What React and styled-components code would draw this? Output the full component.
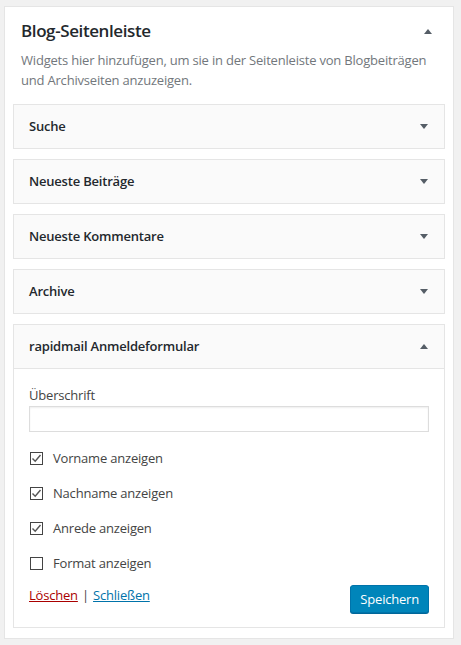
import styled, { createGlobalStyle } from 'styled-components';

const GlobalStyle = createGlobalStyle`
	body {
		margin: 0;
		background: #f1f1f1;
		font-family: 'Open Sans', 'Noto Sans', sans-serif;
		font-size: 13px;
		color: #444;
	}
`;

const Arrow = ({ up }) => (
	<svg width="8" height="5" viewBox="0 0 8 5" style={{ flexShrink: 0 }}>
		<path d={up ? 'M0 5 L4 0 L8 5 Z' : 'M0 0 L8 0 L4 5 Z'} fill="#555d66" />
	</svg>
);

const widgets = ['Suche', 'Neueste Beiträge', 'Neueste Kommentare', 'Archive'];

const options = [
	{ label: 'Vorname anzeigen', checked: true },
	{ label: 'Nachname anzeigen', checked: true },
	{ label: 'Anrede anzeigen', checked: true },
	{ label: 'Format anzeigen', checked: false },
];

const Checkbox = ({ checked }) => (
	<Box>
		{checked && (
			<svg width="11" height="11" viewBox="0 0 11 11">
				<path d="M1.5 5.5 L4.2 8.3 L9.5 2" fill="none" stroke="#555" strokeWidth="1.4" />
			</svg>
		)}
	</Box>
);

const App = () => {
	return (
		<>
			<GlobalStyle />
			<Page>
				<Sidebar>
					<SidebarHead>
						<TitleRow>
							<h2>Blog-Seitenleiste</h2>
							<Arrow up />
						</TitleRow>
						<p>
							Widgets hier hinzufügen, um sie in der Seitenleiste von Blogbeiträgen
							und Archivseiten anzuzeigen.
						</p>
					</SidebarHead>
					<WidgetList>
						{widgets.map((w) => (
							<Widget key={w}>
								<WidgetTop>
									<h3>{w}</h3>
									<Arrow />
								</WidgetTop>
							</Widget>
						))}
						<Widget>
							<WidgetTop open>
								<h3>rapidmail Anmeldeformular</h3>
								<Arrow up />
							</WidgetTop>
							<WidgetInside>
								<Field>
									<label>Überschrift</label>
									<input type="text" />
								</Field>
								<Options>
									{options.map((o) => (
										<Option key={o.label}>
											<Checkbox checked={o.checked} />
											<span>{o.label}</span>
										</Option>
									))}
								</Options>
								<Actions>
									<Links>
										<a className="delete" href="#">Löschen</a>
										<span>|</span>
										<a className="close" href="#">Schließen</a>
									</Links>
									<SaveButton>Speichern</SaveButton>
								</Actions>
							</WidgetInside>
						</Widget>
					</WidgetList>
				</Sidebar>
			</Page>
		</>
	);
};

const Page = styled.div`
	padding: 6px 8px 6px 4px;
`;

const Sidebar = styled.div`
	box-sizing: border-box;
	width: 450px;
	background: #fff;
	border: 1px solid #e5e5e5;
	padding: 0 8px 10px;
`;

const SidebarHead = styled.div`
	padding: 11px 8px 0;

	p {
		margin: 6px 0 0;
		color: #72777c;
		line-height: 20px;
		letter-spacing: -0.2px;
	}
`;

const TitleRow = styled.div`
	display: flex;
	align-items: center;
	justify-content: space-between;
	padding-right: 5px;

	h2 {
		margin: 0;
		font-size: 17px;
		font-weight: 600;
		line-height: 26px;
		color: #23282d;
		letter-spacing: -0.4px;
	}
`;

const WidgetList = styled.div`
	display: flex;
	flex-direction: column;
	gap: 10px;
	margin-top: 14px;
`;

const Widget = styled.div`
	border: 1px solid #e5e5e5;
	background: #fff;
`;

const WidgetTop = styled.div`
	display: flex;
	align-items: center;
	justify-content: space-between;
	background: #fafafa;
	padding: 0 16px 0 15px;
	height: 43px;
	border-bottom: ${(p) => (p.open ? '1px solid #e5e5e5' : 'none')};

	h3 {
		margin: 0;
		font-size: 13px;
		font-weight: 600;
		line-height: 1;
		color: #23282d;
		letter-spacing: -0.2px;
	}
`;

const WidgetInside = styled.div`
	padding: 17px 15px 14px;
`;

const Field = styled.div`
	display: flex;
	flex-direction: column;
	gap: 2px;

	label {
		line-height: 18px;
		letter-spacing: -0.2px;
	}

	input {
		box-sizing: border-box;
		width: 100%;
		height: 26px;
		border: 1px solid #ddd;
		box-shadow: inset 0 1px 2px rgba(0, 0, 0, 0.07);
		margin: 0;
		outline: none;
	}
`;

const Options = styled.div`
	display: flex;
	flex-direction: column;
	gap: 17px;
	margin-top: 17px;
`;

const Option = styled.div`
	display: flex;
	align-items: center;
	gap: 10px;
	height: 18px;
	padding-left: 1px;

	span {
		letter-spacing: -0.2px;
	}
`;

const Box = styled.div`
	box-sizing: border-box;
	width: 13px;
	height: 13px;
	border: 1px solid #444;
	display: flex;
	align-items: center;
	justify-content: center;
`;

const Actions = styled.div`
	display: flex;
	justify-content: space-between;
	align-items: flex-start;
	margin-top: 13px;
`;

const Links = styled.div`
	display: flex;
	gap: 4px;
	line-height: 18px;
	padding-top: 1px;

	a {
		letter-spacing: -0.2px;
	}
	.delete {
		color: #a00;
	}
	.close {
		color: #0073aa;
	}
`;

const SaveButton = styled.button`
	box-sizing: border-box;
	height: 28px;
	padding: 0 9px 1px;
	background: #0085ba;
	border: 1px solid #0073aa;
	border-radius: 3px;
	box-shadow: 0 1px 0 #006799;
	color: #fff;
	font-family: inherit;
	font-size: 13px;
	letter-spacing: -0.2px;
`;

export default App;
